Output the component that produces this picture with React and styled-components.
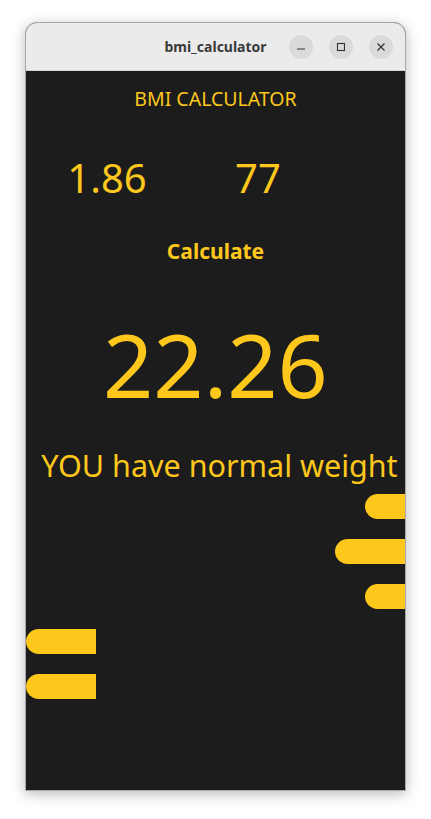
import React from "react";
import styled, { createGlobalStyle } from "styled-components";

const GlobalStyle = createGlobalStyle`
 html, body {
  margin: 0;
  padding: 0;
  background: #ffffff;
 }
 body {
  font-family: "Noto Sans", "Open Sans", sans-serif;
 }
`;

const YELLOW = "#fdc71c";

const Page = styled.div`
 width: 431px;
 height: 819px;
 padding: 22px 0 0 25px;
 box-sizing: border-box;
`;

const Window = styled.div`
 width: 381px;
 height: 769px;
 display: flex;
 flex-direction: column;
 border-radius: 12px 12px 0 0;
 border: 1px solid #a8a8a8;
 box-sizing: border-box;
 overflow: hidden;
 box-shadow: 0 3px 14px rgba(0, 0, 0, 0.28);
 background: #1c1c1c;
`;

const TitleBar = styled.div`
 height: 47px;
 flex: none;
 background: #ebebeb;
 border-bottom: 1px solid #d2d2d2;
 position: relative;
 display: flex;
 align-items: center;
 justify-content: center;
`;

const Title = styled.div`
 font-family: "Noto Sans", sans-serif;
 font-weight: 700;
 font-size: 14px;
 color: #3a3a3a;
`;

const Controls = styled.div`
 position: absolute;
 right: 12px;
 top: 12px;
 display: flex;
 gap: 16px;
`;

const CtrlBtn = styled.div`
 width: 24px;
 height: 24px;
 border-radius: 50%;
 background: #dadada;
 display: flex;
 align-items: center;
 justify-content: center;
`;

const Content = styled.div`
 flex: 1;
 display: flex;
 flex-direction: column;
 background: #1c1c1c;
 color: ${YELLOW};
`;

const Heading = styled.div`
 margin-top: 18px;
 font-size: 19.5px;
 line-height: 1;
 height: 20px;
 text-align: center;
 font-weight: 400;
`;

const InputRow = styled.div`
 margin-top: 49px;
 display: flex;
 padding-left: 31px;
 gap: 51px;
`;

const InputValue = styled.div`
 width: 100px;
 font-size: 40px;
 line-height: 1;
 height: 41px;
 text-align: center;
`;

const CalcButton = styled.div`
 margin-top: 42px;
 font-size: 21px;
 font-weight: 700;
 line-height: 1;
 height: 22px;
 text-align: center;
`;

const Result = styled.div`
 margin-top: 57px;
 font-size: 88px;
 line-height: 1;
 height: 90px;
 text-align: center;
`;

const Message = styled.div`
 margin-top: 40px;
 padding-left: 8px;
 font-size: 30.5px;
 line-height: 1;
 height: 32px;
 text-align: center;
 white-space: nowrap;
`;

const Bar = styled.div`
 margin-top: ${(p) => p.mt}px;
 width: ${(p) => p.w}px;
 height: 25px;
 background: ${YELLOW};
 border-radius: 12.5px 0 0 12.5px;
 align-self: ${(p) => (p.left ? "flex-start" : "flex-end")};
`;

export default function App() {
 return (
  <>
   <GlobalStyle />
   <Page>
    <Window>
     <TitleBar>
      <Title>bmi_calculator</Title>
      <Controls>
       <CtrlBtn>
        <svg width="10" height="10" viewBox="0 0 10 10">
         <line x1="1" y1="7" x2="9" y2="7" stroke="#333" strokeWidth="1.2" />
        </svg>
       </CtrlBtn>
       <CtrlBtn>
        <svg width="10" height="10" viewBox="0 0 10 10">
         <rect x="1.5" y="1.5" width="7" height="7" fill="none" stroke="#333" strokeWidth="1.1" />
        </svg>
       </CtrlBtn>
       <CtrlBtn>
        <svg width="10" height="10" viewBox="0 0 10 10">
         <path d="M1.5 1.5 L8.5 8.5 M8.5 1.5 L1.5 8.5" stroke="#333" strokeWidth="1.2" />
        </svg>
       </CtrlBtn>
      </Controls>
     </TitleBar>
     <Content>
      <Heading>BMI CALCULATOR</Heading>
      <InputRow>
       <InputValue>1.86</InputValue>
       <InputValue>77</InputValue>
      </InputRow>
      <CalcButton>Calculate</CalcButton>
      <Result>22.26</Result>
      <Message>YOU have normal weight</Message>
      <Bar mt={12} w={40} />
      <Bar mt={20} w={70} />
      <Bar mt={20} w={40} />
      <Bar mt={20} w={70} left />
      <Bar mt={20} w={70} left />
     </Content>
    </Window>
   </Page>
  </>
 );
}
